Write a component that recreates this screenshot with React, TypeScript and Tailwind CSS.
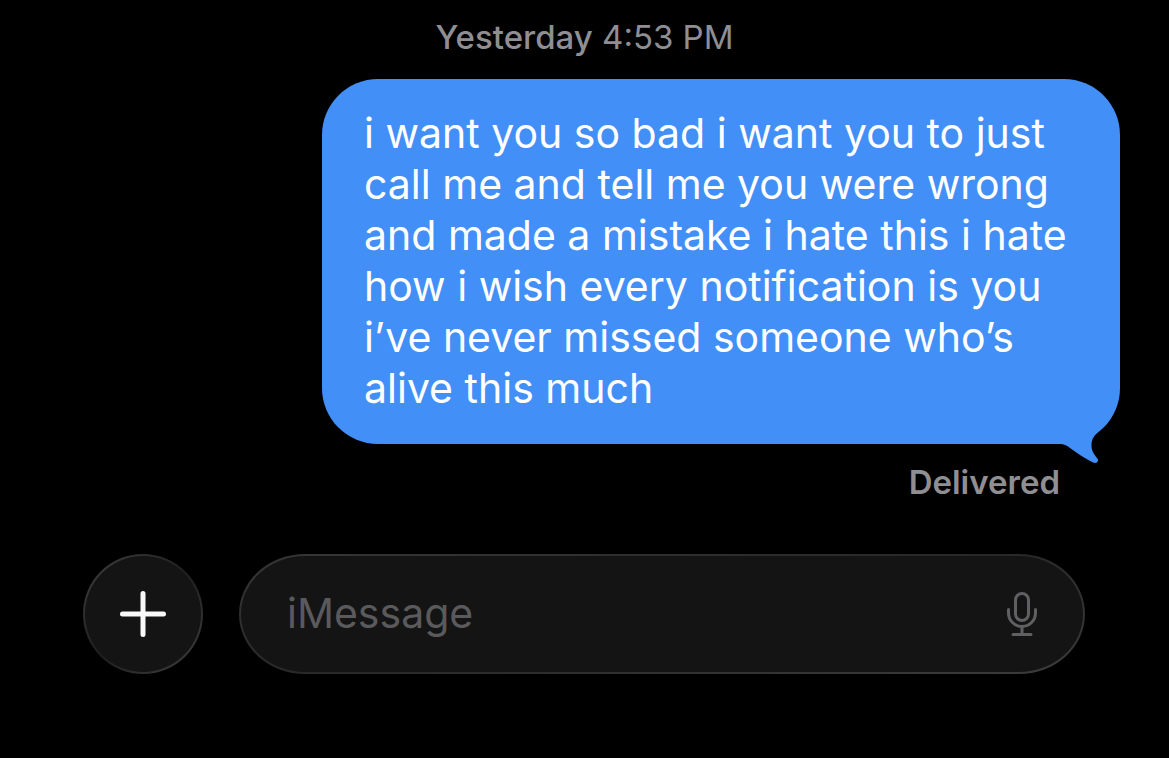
function BubbleTail() {
  return (
    <svg
      aria-hidden="true"
      viewBox="0 0 60 44"
      className="absolute right-0 -bottom-[20px] h-[44px] w-[60px] fill-[#428ff7]"
    >
      <path d="M0 0V24C4 24 6 25 10 28C17 33 24 38 33 42.5C37 44 39.5 41 37 38C33 33 31.5 30 31.5 25C31.5 18 35 15 40 10V0Z" />
    </svg>
  );
}

function PlusIcon() {
  return (
    <svg
      aria-hidden="true"
      viewBox="0 0 46 46"
      className="size-[46px] fill-none stroke-[#f8f8f8] stroke-5"
      strokeLinecap="round"
    >
      <path d="M23 2.5V43.5M2.5 23H43.5" />
    </svg>
  );
}

function MicIcon() {
  return (
    <svg
      aria-hidden="true"
      viewBox="0 0 30 46"
      className="h-[46px] w-[30px] fill-none stroke-[#606062] stroke-3"
      strokeLinecap="round"
    >
      <rect x="8.5" y="2.5" width="13" height="27" rx="6.5" />
      <path d="M1.5 18.5V22A13.5 13.5 0 0 0 28.5 22V18.5M15 35.5V43M6 43.5H24" />
    </svg>
  );
}

export default function App() {
  return (
    <main className="flex min-h-screen flex-col bg-black font-['Inter',sans-serif] text-[#8e8e93]">
      <p className="pt-[17px] text-center text-[33px] leading-[40px]">
        <span className="font-medium">Yesterday</span> 4:53 PM
      </p>
      <section aria-label="Messages" className="mt-[22px] flex flex-col items-end pr-[49px]">
        <div className="relative w-[798px] max-w-full rounded-[56px] bg-[#428ff7] px-[42px] pt-[29px] pb-[30px] text-[41px] leading-[51px] text-white">
          <p>
            i want you so bad i want you to just<br />
            call me and tell me you were wrong<br />
            and made a mistake i hate this i hate<br />
            how i wish every notification is you<br />
            i’ve never missed someone who’s<br />
            alive this much
          </p>
          <BubbleTail />
        </div>
        <p className="mt-[18px] pr-[60px] text-[33px] leading-[40px] font-semibold">Delivered</p>
      </section>
      <form
        className="mt-[52px] flex items-center gap-[36px] pr-[84px] pl-[83px]"
        onSubmit={(event) => event.preventDefault()}
      >
        <button
          type="button"
          aria-label="Add attachment"
          className="flex size-[120px] shrink-0 items-center justify-center rounded-full border-2 border-transparent [background:linear-gradient(#141414,#141414)_padding-box,linear-gradient(135deg,#404040,#1e1e1e_50%,#404040)_border-box]"
        >
          <PlusIcon />
        </button>
        <div className="flex h-[120px] min-w-0 flex-1 items-center rounded-[66px/60px] border-2 border-transparent px-[46px] [background:linear-gradient(#141414,#141414)_padding-box,linear-gradient(170deg,#363636,#282828_50%,#3c3c3c)_border-box]">
          <input
            type="text"
            aria-label="Message"
            placeholder="iMessage"
            className="h-[60px] min-w-0 flex-1 bg-transparent text-[41px] text-white outline-none placeholder:text-[#5a5a5c]"
          />
          <button type="button" aria-label="Dictate" className="shrink-0">
            <MicIcon />
          </button>
        </div>
      </form>
    </main>
  );
}
